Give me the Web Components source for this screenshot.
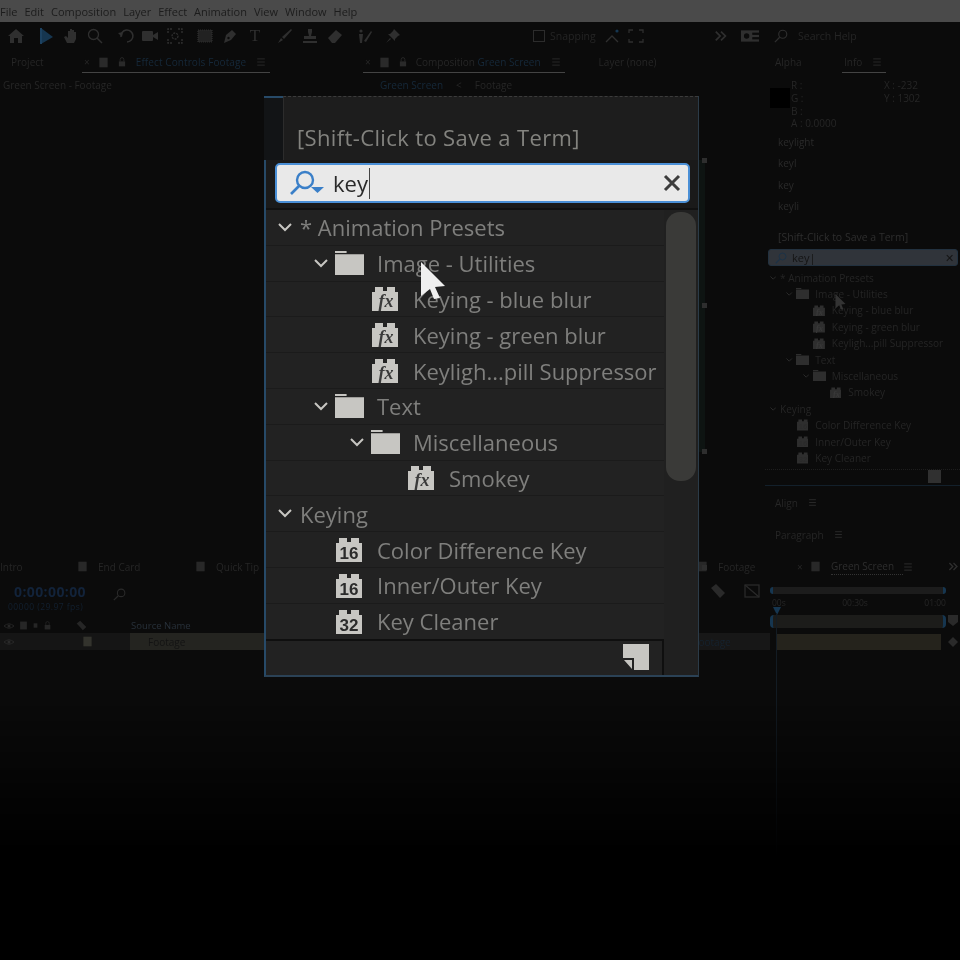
<!DOCTYPE html>
<html>
<head>
<meta charset="utf-8">
<title>After Effects - Effects and Presets search</title>
<style>
  html,body{margin:0;padding:0;background:#000;}
  body{width:960px;height:960px;overflow:hidden;font-family:"Open Sans","Liberation Sans",sans-serif;}
</style>
</head>
<body>
<ae-app></ae-app>

<script>
// little svg helpers, used by nearly every component
var svgs = {
  home:'<path d="M8 1 L16 8 H14 V15 H10 V10 H6 V15 H2 V8 H0 Z" fill="currentColor"/>',
  arrow:'<path d="M3 0 L15 9 L3 16 Z" fill="#163650"/><path d="M3 0 V16" stroke="#1c4160" stroke-width="2"/>',
  hand:'<path d="M4 15 L1 9 L3 8 L5 10 V3 H7 V7 V1 H9 V7 V2 H11 V8 V4 H13 V11 L11 15 Z" fill="currentColor"/>',
  zoom:'<circle cx="6.5" cy="6.5" r="5" fill="none" stroke="currentColor" stroke-width="1.3"/><path d="M10 10 L15 15" stroke="currentColor" stroke-width="1.5"/>',
  undo:'<path d="M3 9 A6 6 0 1 1 9 14" fill="none" stroke="currentColor" stroke-width="1.6"/><path d="M0 5 L5 4 L4 9 Z" fill="currentColor"/>',
  camera:'<rect x="0" y="3" width="11" height="10" rx="1" fill="currentColor"/><path d="M11 7 L16 4 V12 L11 9 Z" fill="currentColor"/>',
  pan:'<circle cx="8" cy="8" r="3" fill="none" stroke="currentColor" stroke-width="1.3" stroke-dasharray="2 1"/><path d="M1 5 V1 H5 M11 1 H15 V5 M15 11 V15 H11 M5 15 H1 V11" fill="none" stroke="currentColor" stroke-width="1.4" stroke-dasharray="2 1"/>',
  rect:'<rect x="1" y="2" width="14" height="12" fill="#222" stroke="currentColor" stroke-width="1.2" stroke-dasharray="1 1"/>',
  pen:'<path d="M2 15 L4 7 L10 2 L14 6 L9 12 Z" fill="currentColor"/><circle cx="6.5" cy="10" r="1.2" fill="#0b0b0b"/>',
  brush:'<path d="M1 15 L4 10 L6 12 Z M5 9 L14 1 L15 2 L7 11 Z" fill="currentColor"/>',
  stamp:'<path d="M6 1 H10 V4 L9 8 H14 V11 H2 V8 H7 L6 4 Z M1 13 H15 V15 H1 Z" fill="currentColor"/>',
  eraser:'<path d="M1 10 L9 2 L15 7 L8 15 H5 Z" fill="currentColor"/>',
  roto:'<circle cx="4" cy="3" r="1.6" fill="currentColor"/><path d="M2 6 H6 L5 15 H3 Z" fill="currentColor"/><path d="M7 13 L14 3 L15 4 L9 14 Z" fill="currentColor"/>',
  pin:'<path d="M9 1 L15 7 L13 8 L10 11 L10 13 L3 6 L5 6 L8 3 Z M5 10 L1 15 L6 11 Z" fill="currentColor"/>',
  snap:'<path d="M1 14 L7 8 L13 14" fill="none" stroke="currentColor" stroke-width="1.3"/><circle cx="12" cy="3" r="1.6" fill="#163650"/>',
  ends:'<path d="M1 5 V2 H5 M11 2 H15 V5 M1 11 V14 H5 M11 14 H15 V11" fill="none" stroke="currentColor" stroke-width="1.3"/>',
  more:'<path d="M2 3 L7 8 L2 13 M8 3 L13 8 L8 13" fill="none" stroke="currentColor" stroke-width="2"/>',
  work:'<rect x="0" y="3" width="18" height="10" fill="currentColor"/><circle cx="5" cy="8" r="2.4" fill="#0b0b0b"/><rect x="10" y="5" width="6" height="2" fill="#0b0b0b"/><rect x="10" y="9" width="6" height="2" fill="#0b0b0b"/>',
  find:'<circle cx="10" cy="6" r="4.6" fill="none" stroke="currentColor" stroke-width="1.3"/><path d="M6.5 9.5 L1 15" stroke="currentColor" stroke-width="1.5"/>',
  burger:'<path d="M2 3 H14 M2 8 H14 M2 13 H14" stroke="currentColor" stroke-width="1.5"/>',
  swatch:'<rect x="2" y="1" width="12" height="14" fill="currentColor"/>',
  lock:'<path d="M5 7 V4 A3 3 0 0 1 11 4 V7" fill="none" stroke="currentColor" stroke-width="1.4"/><rect x="3" y="7" width="10" height="8" fill="currentColor"/>',
  eye:'<path d="M0 8 Q8 1 16 8 Q8 15 0 8 Z" fill="none" stroke="currentColor" stroke-width="1.5"/><circle cx="8" cy="8" r="2.4" fill="currentColor"/>',
  tag:'<path d="M1 5 L6 1 L15 10 L10 15 Z" fill="currentColor"/>',
  box:'<rect x="1" y="2" width="14" height="12" fill="none" stroke="currentColor" stroke-width="1.3"/><path d="M1 2 L15 14" stroke="currentColor" stroke-width="1.3"/>'
};
function icon(name, size, color){
  return '<svg width="'+size+'" height="'+size+'" viewBox="0 0 16 16" style="display:block;flex:none;color:'+(color||'inherit')+'">'+svgs[name]+'</svg>';
}

class AeMenubar extends HTMLElement{
  constructor(){
    super();
    this.attachShadow({mode:"open"});
    var items = ["File","Edit","Composition","Layer","Effect","Animation","View","Window","Help"];
    this.shadowRoot.innerHTML = `
    <style>
      :host{display:flex;align-items:center;height:22px;background:#4a4a4a;color:#1c1c1c;font:11px "Open Sans",sans-serif;gap:7px;flex:none;filter:blur(.3px);}
      span{white-space:nowrap;}
    </style>` + items.map(function(t){return "<span>"+t+"</span>"}).join("");
  }
}
customElements.define("ae-menubar", AeMenubar);

class AeToolbar extends HTMLElement{
  constructor(){
    super();
    this.attachShadow({mode:"open"});
    // name, left margin from the previous icon
    var tools = [["home",8],["arrow",14],["hand",9],["zoom",8],["undo",15],["camera",8],["pan",9],["rect",14],["pen",9]];
    var more = [["brush",14],["stamp",9],["eraser",9],["roto",14],["pin",12]];
    var draw = function(list){return list.map(function(t){return '<i style="margin-left:'+t[1]+'px">'+icon(t[0],16)+'</i>'}).join("")};
    this.shadowRoot.innerHTML = `
    <style>
      :host{display:flex;align-items:center;height:28px;color:#2f2f2f;font:10.5px "Open Sans",sans-serif;flex:none;filter:blur(.4px);}
      i{display:block;}
      .t{font:17px "Liberation Serif",serif;margin-left:9px;width:16px;text-align:center;}
      .snapbox{width:10px;height:10px;border:1px solid #2c2c2c;margin-left:132px;}
      .snap{color:#252525;margin-left:5px;width:46px;white-space:nowrap;}
      .help{color:#252525;margin-left:10px;white-space:nowrap;}
    </style>` + draw(tools) + '<span class="t">T</span>' + draw(more) +
    '<span class="snapbox"></span><span class="snap">Snapping</span>' +
    '<i style="margin-left:9px">'+icon("snap",16)+'</i><i style="margin-left:7px">'+icon("ends",16)+'</i>' +
    '<i style="margin-left:70px">'+icon("more",14)+'</i><i style="margin-left:13px">'+icon("work",18)+'</i>' +
    '<i style="margin-left:15px">'+icon("find",14)+'</i><span class="help">Search Help</span>';
  }
}
customElements.define("ae-toolbar", AeToolbar);

// one panel tab: <ae-tab close swatch lock menu active>Text</ae-tab>
class AeTab extends HTMLElement{
  constructor(){
    super();
    this.attachShadow({mode:"open"});
  }
  connectedCallback(){
    var h = '<style>:host{display:flex;align-items:center;gap:8px;height:20px;padding:0 4px 0 2px;color:#262626;font:10px "Open Sans",sans-serif;white-space:nowrap;box-sizing:border-box;border-bottom:1px solid transparent;}'+
      ':host([active]){border-bottom:1px solid #444;}</style>';
    if(this.hasAttribute("close")) h += '<span>×</span>';
    if(this.hasAttribute("swatch")) h += icon("swatch",11,"#2a2a2a");
    if(this.hasAttribute("lock")) h += icon("lock",10,"#2a2a2a");
    h += '<span><slot></slot></span>';
    if(this.hasAttribute("menu")) h += '<span style="margin-left:2px">'+icon("burger",10,"#2a2a2a")+'</span>';
    this.shadowRoot.innerHTML = h;
  }
}
customElements.define("ae-tab", AeTab);

// tree used twice: the small real one in the panel and the zoomed one
var treeData = [
  [0,"chev","","* Animation Presets"],
  [1,"chev","folder","Image - Utilities"],
  [2,"","fx","Keying - blue blur"],
  [2,"","fx","Keying - green blur"],
  [2,"","fx","Keyligh...pill Suppressor"],
  [1,"chev","folder","Text"],
  [2,"chev","folder","Miscellaneous"],
  [3,"","fx","Smokey"],
  [0,"chev","","Keying"],
  [1,"","16","Color Difference Key"],
  [1,"","16","Inner/Outer Key"],
  [1,"","32","Key Cleaner"]
];

function treeIcon(kind){
  if(kind=="folder"){
    return '<svg class="ic" viewBox="0 0 30 24" style="width:calc(var(--u) * 29);margin-left:calc(var(--u) * -1)" preserveAspectRatio="none"><path d="M0 0 H12 V2 H0 Z M0 3 H30 V23 H0 Z" fill="var(--ink)"/></svg>';
  }
  var word = kind=="fx" ? '<text x="14" y="21" font-family="Liberation Serif,serif" font-style="italic" font-weight="700" font-size="18" text-anchor="middle" fill="#3a3a3a">fx</text>'
    : '<text x="13" y="22" font-family="Liberation Sans,sans-serif" font-weight="700" font-size="17" text-anchor="middle" fill="#2b2b2b">'+kind+'</text>';
  return '<svg class="ic" viewBox="0 0 26 25"><path d="M0 6 H3 V1 H11 V5 H15 V1 H23 V6 H26 V25 H0 Z" fill="var(--ink)"/>'+word+'</svg>';
}

class AeTree extends HTMLElement{
  constructor(){
    super();
    this.attachShadow({mode:"open"});
    var rows = treeData.map(function(r){
      return '<div class="row" style="padding-left:calc(var(--pad,0px) + var(--u) * '+(r[0]*36)+')">'+
        '<span class="tw">'+(r[1]?'<svg viewBox="0 0 14 9"><path d="M1 1 L7 7 L13 1" fill="none" stroke="var(--ink)" stroke-width="2"/></svg>':'')+'</span>'+
        (r[2]?'<span class="slot">'+treeIcon(r[2])+'</span>':'')+
        '<span class="lb">'+r[3]+'</span></div>';
    }).join("");
    this.shadowRoot.innerHTML = `
    <style>
      :host{display:block;--u:1px;--ink:#c7c6c2;color:#7f7f7d;font-family:"Open Sans",sans-serif;font-size:calc(var(--u) * 22);}
      .row{display:flex;align-items:center;height:calc(var(--u) * 35.8);box-sizing:border-box;border-bottom:1px solid var(--line,#1b1b1b);white-space:nowrap;overflow:hidden;}
      .tw{flex:none;width:calc(var(--u) * 22);display:flex;align-items:center;}
      .tw svg{width:calc(var(--u) * 14);height:calc(var(--u) * 9);display:block;}
      .slot{flex:none;width:calc(var(--u) * 41);display:flex;align-items:center;}
      .ic{height:calc(var(--u) * 25);width:calc(var(--u) * 26);display:block;}
      .lb{line-height:1;}
    </style>` + rows;
  }
}
customElements.define("ae-tree", AeTree);

class AeInfoPanel extends HTMLElement{
  constructor(){
    super();
    this.attachShadow({mode:"open"});
    this.shadowRoot.innerHTML = `
    <style>
      :host{display:flex;flex-direction:column;color:#262626;font:10px "Open Sans",sans-serif;position:relative;filter:blur(.35px);}
      .info{display:grid;grid-template-columns:26px 93px 1fr;grid-auto-rows:12.7px;padding:6px 0 0 0;height:50px;align-items:center;}
      .blob{grid-row:1/4;width:20px;height:20px;background:#000;margin-left:5px;}
      .saved{display:flex;flex-direction:column;gap:7.4px;padding:6px 0 0 13px;height:79px;}
      .saved span{height:14px;line-height:14px;color:#2a2a2a;}
      .hint{padding:16px 0 5px 13px;font-size:10.5px;color:#2e2e2e;white-space:nowrap;}
      .search{display:flex;align-items:center;height:17px;margin:0 2px 0 3px;background:#30343a;border:1px solid #22313f;border-radius:3px;color:#141414;gap:5px;padding:0 3px 0 6px;box-sizing:border-box;font-size:11px;}
      .search b{font-weight:400;flex:1;}
      .treebox{margin-top:4px;height:199px;overflow:hidden;}
      ae-tree{--u:.458px;--pad:5px;--ink:#2e2e2e;--line:transparent;color:#252525;}
      .foot{display:flex;justify-content:flex-end;padding:0 19px 3px 0;height:16px;box-sizing:border-box;border-top:1px dotted #1e1e1e;}
      .foot svg{display:block;}
      .head{height:17px;border-top:1px solid #13202b;padding:8px 0 0 10px;display:flex;gap:10px;align-items:center;}
      .head+.head{border-top:0;margin-top:7px;}
    </style>
    <div class="info">
      <span class="blob"></span><span>R :</span><span>X : -232</span>
      <span>G :</span><span>Y : 1302</span>
      <span>B :</span><span></span>
      <span></span><span>A : 0.0000</span><span></span>
    </div>
    <div class="saved"><span>keylight</span><span>keyl</span><span>key</span><span>keyli</span></div>
    <div class="hint">[Shift-Click to Save a Term]</div>
    <div class="search">${icon("find",12,"#1c3247")}<b>key|</b><span>✕</span></div>
    <div class="treebox"><ae-tree></ae-tree></div>
    <div class="foot"><svg width="13" height="13"><rect width="13" height="13" fill="#303030"/></svg></div>
    <div class="head"><span>Align</span>${icon("burger",9,"#2e2e2e")}</div>
    <div class="head"><span>Paragraph</span>${icon("burger",9,"#2e2e2e")}</div>`;
  }
}
customElements.define("ae-info-panel", AeInfoPanel);

class AeTimeline extends HTMLElement{
  constructor(){
    super();
    this.attachShadow({mode:"open"});
    this.shadowRoot.innerHTML = `
    <style>
      :host{display:flex;flex-direction:column;color:#262626;font:10px "Open Sans",sans-serif;flex:none;position:relative;filter:blur(.35px);}
      .tabs{display:flex;align-items:center;height:21px;white-space:nowrap;}
      .tabs svg{margin-right:10px;}
      .tabs span{flex:none;}
      .grid{display:grid;grid-template-columns:770px 176px 1fr;}
      .left{display:flex;flex-direction:column;}
      .top{display:flex;align-items:flex-start;height:41px;padding-top:5px;box-sizing:border-box;}
      .tc{width:113px;padding-left:14px;box-sizing:border-box;}
      .tc b{display:block;font-size:14px;letter-spacing:.4px;line-height:19px;color:#12233a;}
      .tc small{display:block;font-size:8.5px;letter-spacing:.45px;line-height:12px;color:#122030;white-space:nowrap;margin-left:-6px;}
      .mid{margin-left:584px;display:flex;gap:18px;margin-top:1px;}
      .cols{display:flex;align-items:center;height:15px;padding-left:4px;gap:5px;color:#2a2a2a;}
      .cols em{font-style:normal;margin-left:39px;font-size:9.5px;color:#28313a;}
      .layer{display:flex;align-items:center;height:17px;background:linear-gradient(90deg,#151515 130px,#242420 130px,#242420 264px,#171717 264px);padding-left:4px;gap:6px;color:#131313;}
      .layer .n{margin-left:49px;font-size:10px;}
      .layer .m{margin-left:502px;color:#15222e;font-size:10px;}
      .right{display:flex;flex-direction:column;position:relative;}
      .bar{height:7px;margin-top:10px;background:#1c1c1c;border-left:3px solid #163650;border-right:3px solid #163650;border-radius:3px;}
      .ruler{display:flex;justify-content:space-between;height:17px;align-items:center;font-size:8.5px;padding:0 0 0 2px;white-space:nowrap;}
      .work{height:13px;margin-top:4px;background:#1c1c1a;border-left:3px solid #163650;border-right:3px solid #163650;border-radius:4px;}
      .clip{height:16px;margin-top:6px;background:#25231c;margin-left:6px;margin-right:5px;}
      .head{position:absolute;left:3px;top:30px;width:8px;height:8px;background:#163650;clip-path:polygon(0 0,100% 0,50% 100%);}
      .line{position:absolute;left:6px;top:36px;bottom:-300px;width:1px;background:#131c24;}
      .side{display:flex;flex-direction:column;align-items:center;gap:11px;padding-top:38px;}
    </style>
    <div class="tabs">
      <span style="width:77px">Intro</span>
      ${icon("swatch",11,"#282828")}<span style="width:97px">End Card</span>
      ${icon("swatch",11,"#282828")}<span style="width:481px">Quick Tip</span>
      ${icon("swatch",11,"#282828")}<span style="width:76px">Footage</span>
      <span style="width:16px;margin-left:3px;margin-right:-3px">×</span>
      ${icon("swatch",11,"#282828")}<span style="width:72px;color:#2e2e2e;border-bottom:1px dotted #333;line-height:15px">Green Screen</span>
      ${icon("burger",10,"#2e2e2e")}
      <span style="margin-left:25px">${icon("more",11,"#2e2e2e")}</span>
    </div>
    <div class="grid">
      <div class="left">
        <div class="top">
          <div class="tc"><b>0:00:00:00</b><small>00000 (29.97 fps)</small></div>
          <span style="margin-top:6px">${icon("find",13,"#2a2a2a")}</span>
          <span class="mid">${icon("tag",16,"#2a2a2a")}${icon("box",16,"#2a2a2a")}</span>
        </div>
        <div class="cols">${icon("eye",10,"#262626")}${icon("swatch",9,"#262626")}${icon("swatch",5,"#262626")}${icon("lock",9,"#262626")}<span style="width:14px"></span>${icon("tag",11,"#262626")}<em>Source Name</em></div>
        <div class="layer">${icon("eye",10,"#2a2a2a")}<span style="width:56px"></span>${icon("swatch",11,"#33332d")}<span class="n">Footage</span><span class="m">Footage</span></div>
      </div>
      <div class="right">
        <div class="bar"></div>
        <div class="ruler"><span>00s</span><span>00:30s</span><span>01:00</span></div>
        <div class="work"></div>
        <div class="clip"></div>
        <i class="head"></i><i class="line"></i>
      </div>
      <div class="side"><svg width="10" height="11"><path d="M0 0 H10 V7 L5 11 L0 7 Z" fill="#2a2a2a"/></svg><svg width="10" height="10"><path d="M5 0 L10 5 L5 10 L0 5 Z" fill="#2a2a2a"/></svg></div>
    </div>`;
  }
}
customElements.define("ae-timeline", AeTimeline);

class AeZoomPanel extends HTMLElement{
  constructor(){
    super();
    this.attachShadow({mode:"open"});
    this.shadowRoot.innerHTML = `
    <style>
      :host{position:absolute;left:264px;top:96px;width:435px;height:581px;box-sizing:border-box;display:flex;flex-direction:column;background:#222;border-left:2px solid #274a68;border-bottom:2px solid #2b4256;border-right:1px solid #2b3b48;font-family:"Open Sans",sans-serif;filter:blur(.55px);}
      .head{height:64px;margin-left:17px;box-sizing:border-box;background:#1d1d1d;border-top:1px dashed #3c3c3c;border-left:1px solid #2c2c2c;display:flex;align-items:flex-end;padding:0 0 8px 13px;color:#83837f;font-size:22px;letter-spacing:.37px;white-space:nowrap;flex:none;}
      .cap{position:absolute;left:-2px;top:0;width:19px;height:64px;background:#121416;border-top:2px solid #274a68;box-sizing:border-box;}
      .searchwrap{height:50px;flex:none;box-sizing:border-box;padding:3px 8px 0 9px;background:#1a1a1a;border-bottom:2px solid #111;}
      .search{height:40px;box-sizing:border-box;background:#e9e9e9;border:2px solid #4a8fd6;border-radius:5px;display:flex;align-items:center;padding:0 7px 0 12px;color:#2a2a2a;font-size:22px;}
      .typed{margin-left:8px;line-height:1;}
      .caret{width:1.5px;height:31px;background:#444;margin-left:1px;}
      .x{margin-left:auto;display:block;}
      .body{flex:1;display:grid;grid-template-columns:1fr 34px;min-height:0;}
      .list{overflow:hidden;}
      ae-tree{--pad:12px;}
      .gutter{background:#202020;padding:2px 2px 0 2px;box-sizing:border-box;}
      .thumb{height:269px;background:#3a3a38;border-radius:14px;}
      .foot{height:36px;flex:none;box-sizing:border-box;display:grid;grid-template-columns:1fr 34px;}
      .foot div{border-top:2px solid #0f0f0f;border-right:2px solid #0f0f0f;display:flex;justify-content:flex-end;padding:3px 13px 0 0;}
      .foot span{background:#202020;}
      .dot{position:absolute;right:-9px;width:5px;height:5px;background:#2e2e2e;}
      .stripe{position:absolute;right:-7px;top:64px;width:6px;height:292px;background:#0e1412;}
    </style>
    <div class="cap"></div>
    <div class="head">[Shift-Click to Save a Term]</div>
    <div class="searchwrap"><div class="search">
      <svg width="36" height="26" viewBox="0 0 36 26"><circle cx="16" cy="10" r="8" fill="none" stroke="#3a7fc8" stroke-width="2.4"/><path d="M10 16 L2 24" stroke="#3a7fc8" stroke-width="2.6"/><path d="M22 17 H35 L28.500 23 Z" fill="#3a7fc8"/></svg>
      <span class="typed">key</span><span class="caret"></span>
      <svg class="x" width="18" height="18" viewBox="0 0 18 18"><path d="M2 2 L16 16 M16 2 L2 16" stroke="#3c3c3c" stroke-width="3"/></svg>
    </div></div>
    <div class="body">
      <div class="list"><ae-tree></ae-tree></div>
      <div class="gutter"><div class="thumb"></div></div>
    </div>
    <div class="foot"><div><svg width="26" height="26" viewBox="0 0 26 26"><path d="M0 0 H26 V26 H11 V14 H0 Z M1 16 H9 V25 Z" fill="#c7c6c2"/></svg></div><span></span></div>
    <i class="stripe"></i>
    <i class="dot" style="top:62px"></i><i class="dot" style="top:207px"></i><i class="dot" style="top:353px"></i><i class="dot" style="top:469px"></i>`;
  }
}
customElements.define("ae-zoom-panel", AeZoomPanel);

// mouse pointer, lies over everything
class AeCursor extends HTMLElement{
  constructor(){
    super();
    this.attachShadow({mode:"open"});
    this.shadowRoot.innerHTML = `
    <style>:host{position:absolute;display:block;}svg{display:block;}</style>
    <svg viewBox="0 0 26 38" width="100%" height="100%"><path d="M1 0 L25 24 L15 25 L20 36 L14 37 L10 27 L1 34 Z" fill="var(--c,#efefef)"/></svg>`;
  }
}
customElements.define("ae-cursor", AeCursor);

class AeApp extends HTMLElement{
  constructor(){
    super();
    this.attachShadow({mode:"open"});
    this.shadowRoot.innerHTML = `
    <style>
      :host{display:flex;flex-direction:column;position:relative;width:960px;height:960px;overflow:hidden;background:#0b0b0b;color:#262626;font:10px "Open Sans",sans-serif;}
      .upper{display:grid;grid-template-columns:363px 402px 195px;height:506px;flex:none;}
      .pane{display:flex;flex-direction:column;min-width:0;}
      .tabs{display:flex;align-items:center;height:21px;padding-top:2px;filter:blur(.35px);}
      .sub{display:flex;gap:13px;padding:5px 0 0 3px;white-space:nowrap;filter:blur(.35px);}
      .blue{color:#16293a;}
      .fade{position:absolute;left:0;right:0;top:690px;height:170px;background:linear-gradient(180deg,rgba(0,0,0,0),#000);}
      .end{position:absolute;left:0;right:0;top:860px;bottom:0;background:#000;}
    </style>
    <ae-menubar></ae-menubar>
    <ae-toolbar></ae-toolbar>
    <div class="upper">
      <div class="pane">
        <div class="tabs">
          <ae-tab style="margin-left:9px;width:73px">Project</ae-tab>
          <ae-tab close swatch lock menu active><span class="blue" style="margin-left:1px;letter-spacing:.1px">Effect Controls Footage</span></ae-tab>
        </div>
        <div class="sub">Green Screen - Footage</div>
      </div>
      <div class="pane">
        <div class="tabs">
          <ae-tab close swatch lock menu active>Composition <span class="blue">Green Screen</span></ae-tab>
          <ae-tab style="margin-left:32px">Layer (none)</ae-tab>
        </div>
        <div class="sub" style="padding-left:17px"><span class="blue">Green Screen</span><span>&lt;</span><span>Footage</span></div>
      </div>
      <div class="pane">
        <div class="tabs">
          <ae-tab style="margin-left:8px;width:69px">Alpha</ae-tab>
          <ae-tab menu active>Info</ae-tab>
        </div>
        <ae-info-panel></ae-info-panel>
      </div>
    </div>
    <ae-timeline></ae-timeline>
    <div class="fade"></div><div class="end"></div>
    <ae-zoom-panel></ae-zoom-panel>
    <ae-cursor style="left:420px;top:262px;width:26px;height:38px"></ae-cursor>
    <ae-cursor style="left:835px;top:294px;width:11px;height:16px;--c:#333"></ae-cursor>`;
  }
}
customElements.define("ae-app", AeApp);
</script>
</body>
</html>
